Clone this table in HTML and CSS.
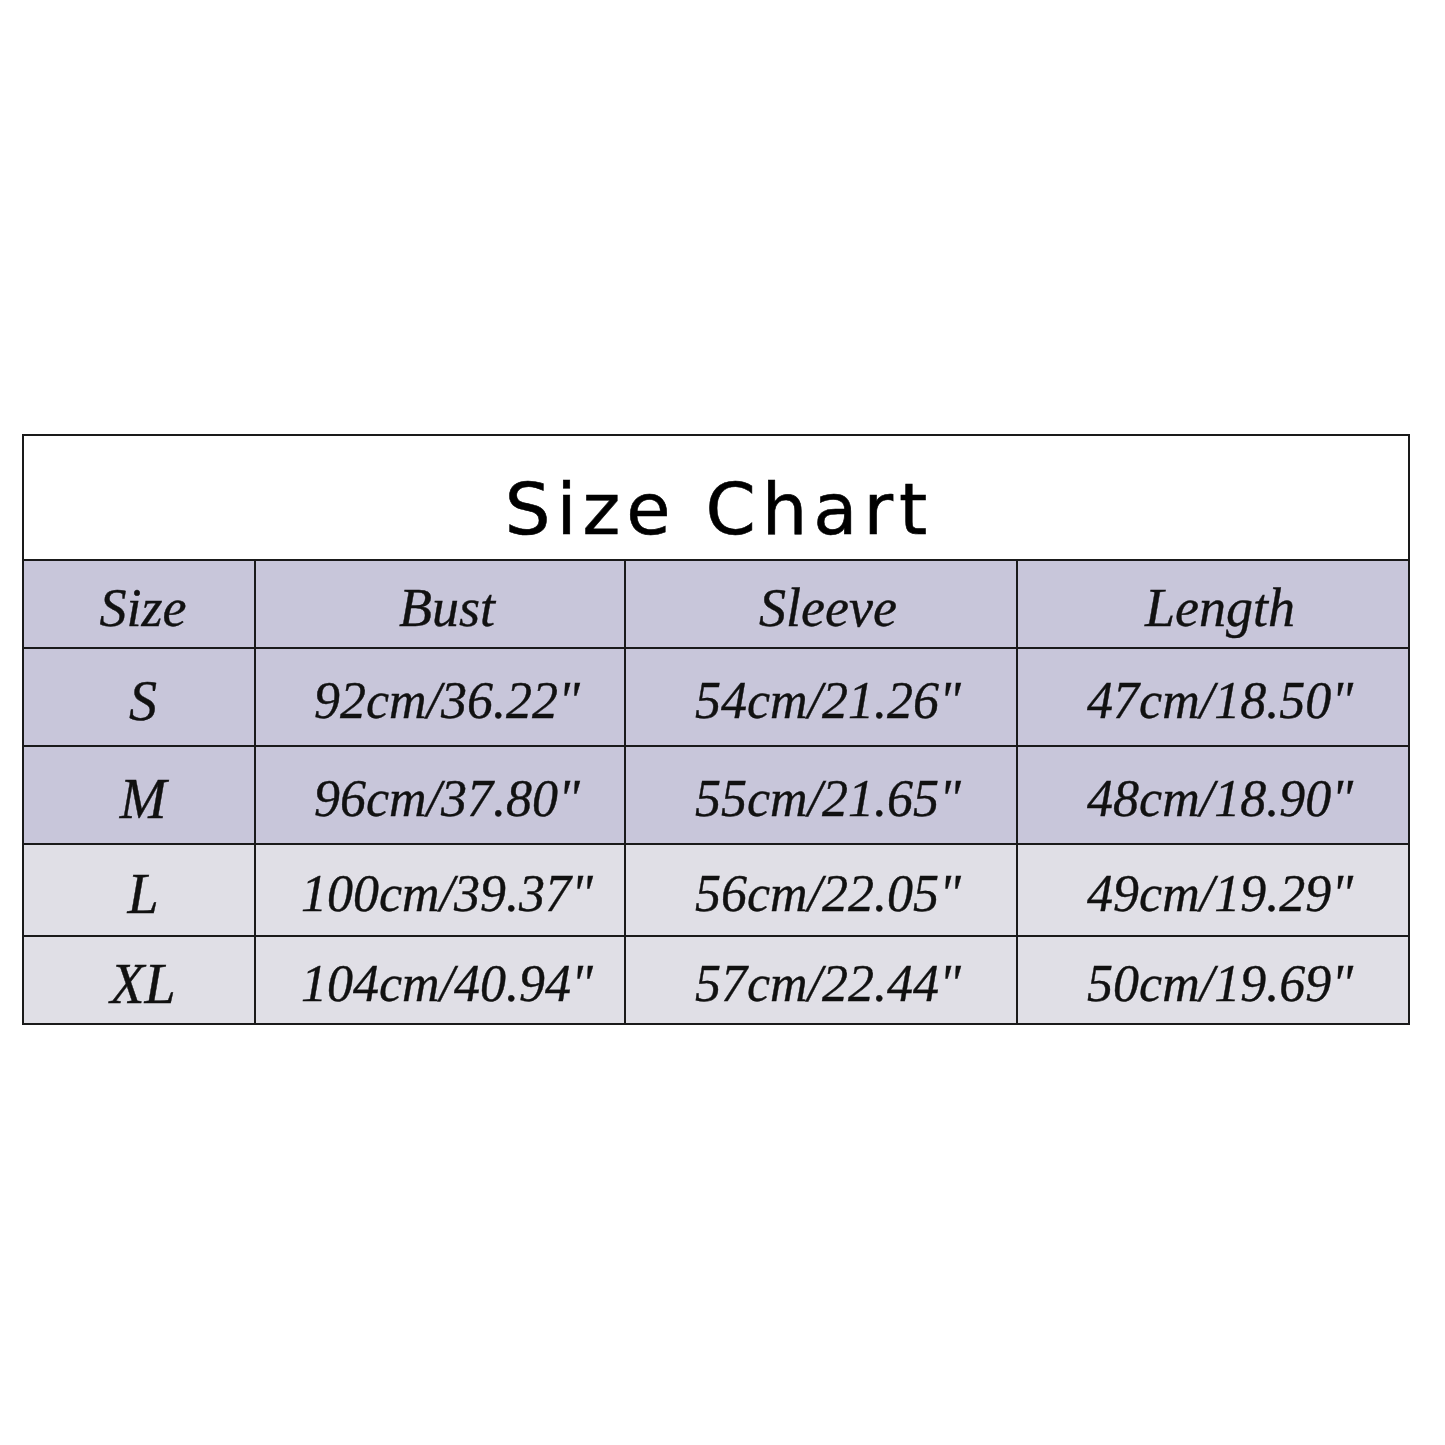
FILE: index.html
```html
<!DOCTYPE html>
<html>
<head>
<meta charset="utf-8">
<link rel="stylesheet" href="styles.css">
</head>
<body>
<div class="page">
<table class="chart">
  <colgroup>
    <col class="c1"><col class="c2"><col class="c3"><col class="c4">
  </colgroup>
  <tr class="title-row"><td colspan="4" class="title">Size Chart</td></tr>
  <tr class="head r-head"><td class="sz">Size</td><td>Bust</td><td>Sleeve</td><td>Length</td></tr>
  <tr class="lav r-s"><td class="sz">S</td><td>92cm/36.22"</td><td>54cm/21.26"</td><td>47cm/18.50"</td></tr>
  <tr class="lav r-m"><td class="sz">M</td><td>96cm/37.80"</td><td>55cm/21.65"</td><td>48cm/18.90"</td></tr>
  <tr class="gray r-l"><td class="sz">L</td><td>100cm/39.37"</td><td>56cm/22.05"</td><td>49cm/19.29"</td></tr>
  <tr class="gray r-xl"><td class="sz">XL</td><td>104cm/40.94"</td><td>57cm/22.44"</td><td>50cm/19.69"</td></tr>
</table>
</div>
</body>
</html>
```
FILE: styles.css
```css
html, body {
  margin: 0;
  padding: 0;
  background: #ffffff;
}
.page {
  padding: 434px 0 0 22px;
}
.chart {
  border-collapse: collapse;
  width: 1386px;
  table-layout: fixed;
  font-family: "Liberation Serif", "Times New Roman", serif;
  font-style: italic;
  color: #111;
}
.c1 { width: 232px; }
.c2 { width: 370px; }
.c3 { width: 392px; }
.c4 { width: 392px; }
.chart td {
  border: 2px solid #1a1a1a;
  text-align: center;
  vertical-align: middle;
  padding: 8px 0 0 14px;
  font-size: 52px;
  line-height: 1;
  -webkit-text-stroke: 0.4px #111;
}
.title-row { height: 125px; }
.chart td.title {
  background: #fff;
  font-family: "DejaVu Sans", sans-serif;
  font-style: normal;
  font-size: 72px;
  letter-spacing: 6px;
  color: #000;
  padding: 22px 0 0 6px;
  -webkit-text-stroke: 0.6px #000;
}
.head td {
  background: #c8c6da;
  font-size: 54px;
}
.r-head { height: 88px; }
.r-s, .r-m { height: 98px; }
.r-l { height: 92px; }
.r-xl { height: 88px; }
.lav td { background: #c8c6da; }
.gray td { background: #e0dfe6; }
.chart td.sz { font-size: 56px; padding-left: 8px; }
.head td.sz { font-size: 54px; }
```
